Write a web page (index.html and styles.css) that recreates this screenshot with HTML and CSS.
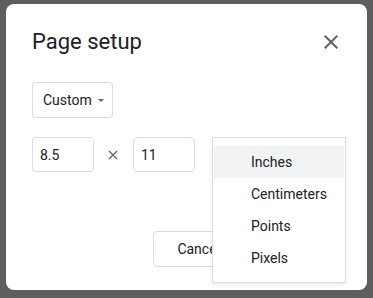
FILE: index.html
```html
<!DOCTYPE html>
<html lang="en">
<head>
  <meta charset="UTF-8">
  <meta name="viewport" content="width=device-width, initial-scale=1.0">
  <title>Page setup</title>
  <link rel="stylesheet" href="styles.css">
</head>
<body>
  <div class="dialog">
    <div class="dialog-header">
      <h1 class="dialog-title">Page setup</h1>
      <button class="close-btn" aria-label="Close">
        <svg width="24" height="24" viewBox="0 0 24 24"><path d="M19 6.41 17.59 5 12 10.59 6.41 5 5 6.41 10.59 12 5 17.59 6.41 19 12 13.41 17.59 19 19 17.59 13.41 12z" fill="#5f6368"/></svg>
      </button>
    </div>

    <button class="select-btn">Custom <span class="caret"></span></button>

    <div class="size-row">
      <input class="size-input" type="text" value="8.5">
      <svg class="times" width="10" height="10" viewBox="0 0 10 10"><path d="M1 1 9 9M9 1 1 9" stroke="#5f6368" stroke-width="1.3"/></svg>
      <input class="size-input" type="text" value="11">

      <ul class="menu">
        <li class="menu-item active">Inches</li>
        <li class="menu-item">Centimeters</li>
        <li class="menu-item">Points</li>
        <li class="menu-item">Pixels</li>
      </ul>
    </div>

    <div class="dialog-footer">
      <button class="btn">Cancel</button>
      <button class="btn btn-primary">OK</button>
    </div>
  </div>
</body>
</html>
```

FILE: styles.css
```css
body {
  margin: 0;
  background-color: #5e5e5e;
  font-family: Roboto, "Liberation Sans", Arial, sans-serif;
  color: #202124;
}
.dialog {
  box-sizing: border-box;
  width: 361px;
  height: 286px;
  margin: 4px 0 0 6px;
  padding: 22px 24px 23px 26px;
  background-color: #fff;
  border-radius: 8px;
  display: flex;
  flex-direction: column;
}
.dialog-header {
  display: flex;
  justify-content: space-between;
  align-items: center;
}
.dialog-title {
  margin: 0;
  font-size: 22px;
  line-height: 32px;
  font-weight: 400;
}
.close-btn {
  width: 24px;
  height: 24px;
  padding: 0;
  border: none;
  background: none;
  display: flex;
}
.select-btn {
  align-self: flex-start;
  margin-top: 24px;
  height: 36px;
  padding: 0 8px 0 10px;
  border: 1px solid #dadce0;
  border-radius: 4px;
  background: #fff;
  font-family: inherit;
  font-size: 14px;
  color: #202124;
  display: flex;
  align-items: center;
  gap: 6px;
}
.caret {
  width: 0;
  height: 0;
  border-left: 3.5px solid transparent;
  border-right: 3.5px solid transparent;
  border-top: 3.5px solid #5f6368;
}
.size-row {
  position: relative;
  margin-top: 19px;
  display: flex;
  align-items: center;
}
.size-input {
  box-sizing: border-box;
  width: 62px;
  height: 35px;
  padding: 0 7px;
  border: 1px solid #dadce0;
  border-radius: 4px;
  font-family: inherit;
  font-size: 14px;
  color: #202124;
}
.times {
  margin: 0 15px 0 14px;
}
.menu {
  position: absolute;
  top: 0;
  left: 180px;
  width: 134px;
  box-sizing: border-box;
  margin: 0;
  padding: 8px 1px;
  list-style: none;
  background: #fff;
  border: 1px solid #dadce0;
  box-shadow: 0 2px 4px rgba(0, 0, 0, 0.08);
  z-index: 2;
}
.menu-item {
  height: 32px;
  line-height: 32px;
  padding-left: 37px;
  font-size: 14px;
}
.menu-item.active {
  background-color: #f1f3f4;
}
.dialog-footer {
  margin-top: auto;
  display: flex;
  justify-content: flex-end;
  gap: 8px;
}
.btn {
  height: 36px;
  padding: 0 23px;
  border: 1px solid #dadce0;
  border-radius: 4px;
  background: #fff;
  font-family: inherit;
  font-size: 14px;
  font-weight: 400;
  color: #202124;
}
.btn-primary {
  min-width: 91px;
  background-color: #1a73e8;
  border-color: #1a73e8;
  color: #fff;
}
```
